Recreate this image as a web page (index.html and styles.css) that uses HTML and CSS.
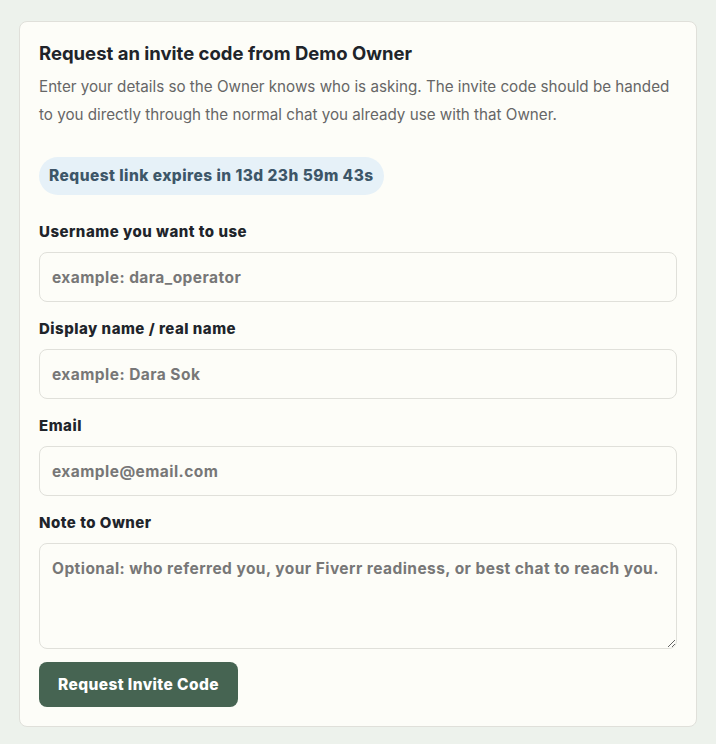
FILE: index.html
```html
<!DOCTYPE html>
<html lang="en">
<head>
    <meta charset="UTF-8">
    <meta name="viewport" content="width=device-width, initial-scale=1.0">
    <title>Request an invite code</title>
    <link rel="stylesheet" href="styles.css">
</head>
<body>
    <div class="request-card">
        <h1>Request an invite code from Demo Owner</h1>
        <p class="intro">Enter your details so the Owner knows who is asking. The invite code should be handed to you directly through the normal chat you already use with that Owner.</p>

        <div class="expiry-pill">Request link expires in <span id="countdown">13d 23h 59m 43s</span></div>

        <form class="request-form">
            <div class="field">
                <label for="username">Username you want to use</label>
                <input type="text" id="username" placeholder="example: dara_operator">
            </div>
            <div class="field">
                <label for="display-name">Display name / real name</label>
                <input type="text" id="display-name" placeholder="example: Dara Sok">
            </div>
            <div class="field">
                <label for="email">Email</label>
                <input type="email" id="email" placeholder="example@email.com">
            </div>
            <div class="field">
                <label for="note">Note to Owner</label>
                <textarea id="note" placeholder="Optional: who referred you, your Fiverr readiness, or best chat to reach you."></textarea>
            </div>
            <button type="button" class="btn-primary">Request Invite Code</button>
        </form>
    </div>
</body>
</html>
```

FILE: styles.css
```css
:root {
    --page-bg: #edf2ec;
    --card-bg: #fdfdf8;
    --border-color: #e0e0da;
    --text-color: #20242a;
    --muted-color: #666;
    --primary-color: #466452;
    --radius: 8px;
}

* {
    margin: 0;
    padding: 0;
    box-sizing: border-box;
    font-family: 'Inter', 'Noto Sans', sans-serif;
}

body {
    background-color: var(--page-bg);
    color: var(--text-color);
    padding: 21px 19px;
}

.request-card {
    background-color: var(--card-bg);
    border: 1px solid var(--border-color);
    border-radius: var(--radius);
    padding: 19px 19px 19px;
}

.request-card h1 {
    font-size: 18.5px;
    font-weight: 700;
    line-height: 24px;
}

.intro {
    margin-top: 8px;
    font-size: 15.2px;
    line-height: 28px;
    color: var(--muted-color);
}

.expiry-pill {
    display: inline-block;
    margin-top: 28px;
    padding: 9px 10px;
    background-color: #e6f1f8;
    color: #3d5668;
    border-radius: 19px;
    font-size: 15.5px;
    font-weight: 800;
    letter-spacing: 0.45px;
    line-height: 20px;
}

.request-form {
    margin-top: 27px;
}

.field {
    margin-bottom: 17px;
}

.field label {
    display: block;
    font-size: 15px;
    font-weight: 800;
    letter-spacing: 0.5px;
    line-height: 20px;
    margin-bottom: 10px;
}

.field input,
.field textarea {
    display: block;
    width: 100%;
    height: 50px;
    padding: 0 12px;
    background-color: var(--card-bg);
    border: 1px solid var(--border-color);
    border-radius: var(--radius);
    font-size: 15.5px;
    font-weight: 700;
    letter-spacing: 0.45px;
    color: var(--text-color);
}

.field textarea {
    height: 106px;
    padding: 14px 12px;
    line-height: 22px;
    resize: vertical;
}

.field input::placeholder,
.field textarea::placeholder {
    color: #777;
}

.field:last-of-type {
    margin-bottom: 13px;
}

.btn-primary {
    height: 45px;
    padding: 0 19px;
    background-color: var(--primary-color);
    color: white;
    border: none;
    border-radius: var(--radius);
    font-size: 15.5px;
    font-weight: 800;
    letter-spacing: 0.4px;
    cursor: pointer;
}
```
